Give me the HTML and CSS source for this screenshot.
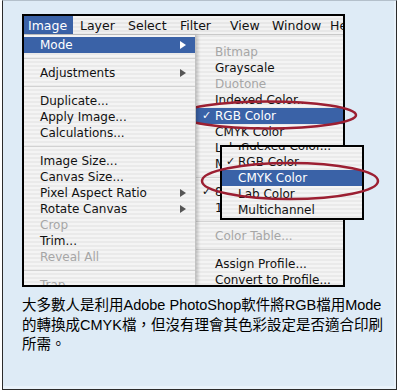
FILE: index.html
```html
<!DOCTYPE html>
<html>
<head>
<meta charset="utf-8">
<link rel="stylesheet" href="styles.css">
</head>
<body>
<div class="card">
  <div class="shot">
    <div class="menubar">
      <span class="mb-item active">Image</span>
      <span class="mb-item">Layer</span>
      <span class="mb-item">Select</span>
      <span class="mb-item">Filter</span>
      <span class="mb-item">View</span>
      <span class="mb-item">Window</span>
      <span class="mb-item">Help</span>
    </div>
    <div class="menus">
      <ul class="menu image-menu">
        <li class="row hi sub">Mode</li>
        <li class="sep"></li>
        <li class="row sub">Adjustments</li>
        <li class="sep"></li>
        <li class="row">Duplicate...</li>
        <li class="row">Apply Image...</li>
        <li class="row">Calculations...</li>
        <li class="sep"></li>
        <li class="row">Image Size...</li>
        <li class="row">Canvas Size...</li>
        <li class="row sub">Pixel Aspect Ratio</li>
        <li class="row sub">Rotate Canvas</li>
        <li class="row dis">Crop</li>
        <li class="row">Trim...</li>
        <li class="row dis">Reveal All</li>
        <li class="sep"></li>
        <li class="row dis">Trap...</li>
      </ul>
      <ul class="menu mode-menu">
        <li class="row dis"><span class="chk"></span>Bitmap</li>
        <li class="row"><span class="chk"></span>Grayscale</li>
        <li class="row dis"><span class="chk"></span>Duotone</li>
        <li class="row"><span class="chk"></span>Indexed Color...</li>
        <li class="row hi"><span class="chk">✓</span>RGB Color</li>
        <li class="row"><span class="chk"></span>CMYK Color</li>
        <li class="row"><span class="chk"></span>Lab Color</li>
        <li class="row"><span class="chk"></span>Multichannel</li>
        <li class="sep"></li>
        <li class="row"><span class="chk">✓</span>8 Bits/Channel</li>
        <li class="row"><span class="chk"></span>16 Bits/Channel</li>
        <li class="sep"></li>
        <li class="row dis"><span class="chk"></span>Color Table...</li>
        <li class="sep"></li>
        <li class="row"><span class="chk"></span>Assign Profile...</li>
        <li class="row"><span class="chk"></span>Convert to Profile...</li>
      </ul>
    </div>
  </div>
  <p class="caption">大多數人是利用Adobe PhotoShop軟件將RGB檔用Mode<br>的轉換成CMYK檔，但沒有理會其色彩設定是否適合印刷<br>所需。</p>

  <div class="popup">
    <ul class="menu popup-list">
      <li class="row"><span class="chk"></span>Indexed Color...</li>
      <li class="row"><span class="chk">✓</span>RGB Color</li>
      <li class="row hi"><span class="chk"></span>CMYK Color</li>
      <li class="row"><span class="chk"></span>Lab Color</li>
      <li class="row"><span class="chk"></span>Multichannel</li>
    </ul>
  </div>

  <svg class="marks" width="400" height="392" viewBox="0 0 400 392">
    <ellipse cx="268" cy="115" rx="88" ry="13.5" />
    <ellipse cx="290" cy="181" rx="88" ry="18" />
  </svg>
</div>
</body>
</html>
```

FILE: styles.css
```css
body {
  margin: 0;
  background: #ffffff;
}

.card {
  position: relative;
  z-index: 0;
  width: 400px;
  height: 392px;
  box-sizing: border-box;
  padding: 14px 0 0 22px;
  font-family: "DejaVu Sans", sans-serif;
}

.card::before {
  content: "";
  position: absolute;
  z-index: -1;
  left: 2px;
  top: 0;
  width: 395px;
  height: 390px;
  box-sizing: border-box;
  border: 1px solid #2b2b2b;
  border-top-color: #b4c0cb;
  background: #deebf6;
  box-shadow: inset -3px -4px 0 -1px #e9f2fa;
}

.shot {
  width: 319px;
  height: 269px;
  border: 2px solid #000;
  overflow: hidden;
  background: #ececec;
}

.menubar {
  display: grid;
  grid-template-columns: 52px 48px 52px 50px 42px 58px 1fr;
  height: 18px;
  border-bottom: 1px solid #c9c9c9;
  background: repeating-linear-gradient(#f2f2f2 0 2px, #e7e7e7 2px 4px);
}

.mb-item {
  padding-left: 4px;
  font-size: 12.5px;
  line-height: 19px;
  color: #111;
  white-space: nowrap;
  overflow: hidden;
}

.mb-item.active {
  width: 49px;
  box-sizing: border-box;
  background: #3a62a7;
  color: #fff;
}

.menus {
  display: flex;
  align-items: flex-start;
  height: 250px;
  background: #e8e8e8;
}

.menu {
  list-style: none;
  margin: 0;
  padding: 0;
  font-size: 12px;
  color: #111;
  background: repeating-linear-gradient(#f4f4f4 0 2px, #eaeaea 2px 4px);
}

.image-menu {
  position: relative;
  z-index: 1;
  width: 171px;
  height: 250px;
  box-sizing: border-box;
  padding-top: 2px;
  box-shadow: 1px 0 0 #c2c2c2, 3px 0 3px rgba(0, 0, 0, 0.2);
}

.mode-menu {
  flex: 1;
  margin-left: 1px;
  margin-top: 2px;
  padding-top: 7px;
  height: 260px;
}

.row {
  display: flex;
  align-items: center;
  height: 16px;
  line-height: 16px;
  white-space: nowrap;
}

.image-menu .row {
  padding: 0 9px 0 16px;
}

.mode-menu .row {
  padding-left: 6px;
}

.chk {
  flex: none;
  width: 13px;
  font-size: 11px;
}

.row.hi {
  background: #3a62a7;
  color: #fff;
}

.row.dis {
  color: #a6a6a6;
}

.sep {
  height: 12px;
  background: linear-gradient(transparent 5px, #d2d2d2 5px 6px, transparent 6px);
}

.sub::after {
  content: "";
  margin-left: auto;
  border-left: 6px solid #555;
  border-top: 4px solid transparent;
  border-bottom: 4px solid transparent;
}

.hi.sub::after {
  border-left-color: #fff;
}

.caption {
  margin: 9px 0 0;
  font-family: "Liberation Sans", "Noto Sans CJK TC", sans-serif;
  font-size: 14.5px;
  line-height: 19.5px;
  white-space: nowrap;
  color: #000;
}

.popup {
  position: absolute;
  left: 220px;
  top: 145px;
  width: 140px;
  height: 71px;
  border: 2px solid #000;
  overflow: hidden;
  background: #efefef;
}

.popup-list {
  margin-top: -9px;
}

.popup-list .row {
  padding-left: 4px;
}

.popup-list .chk {
  width: 12px;
}

.marks {
  position: absolute;
  left: 0;
  top: 0;
  pointer-events: none;
}

.marks ellipse {
  fill: none;
  stroke: #9c1f32;
  stroke-width: 2.5;
}
```
